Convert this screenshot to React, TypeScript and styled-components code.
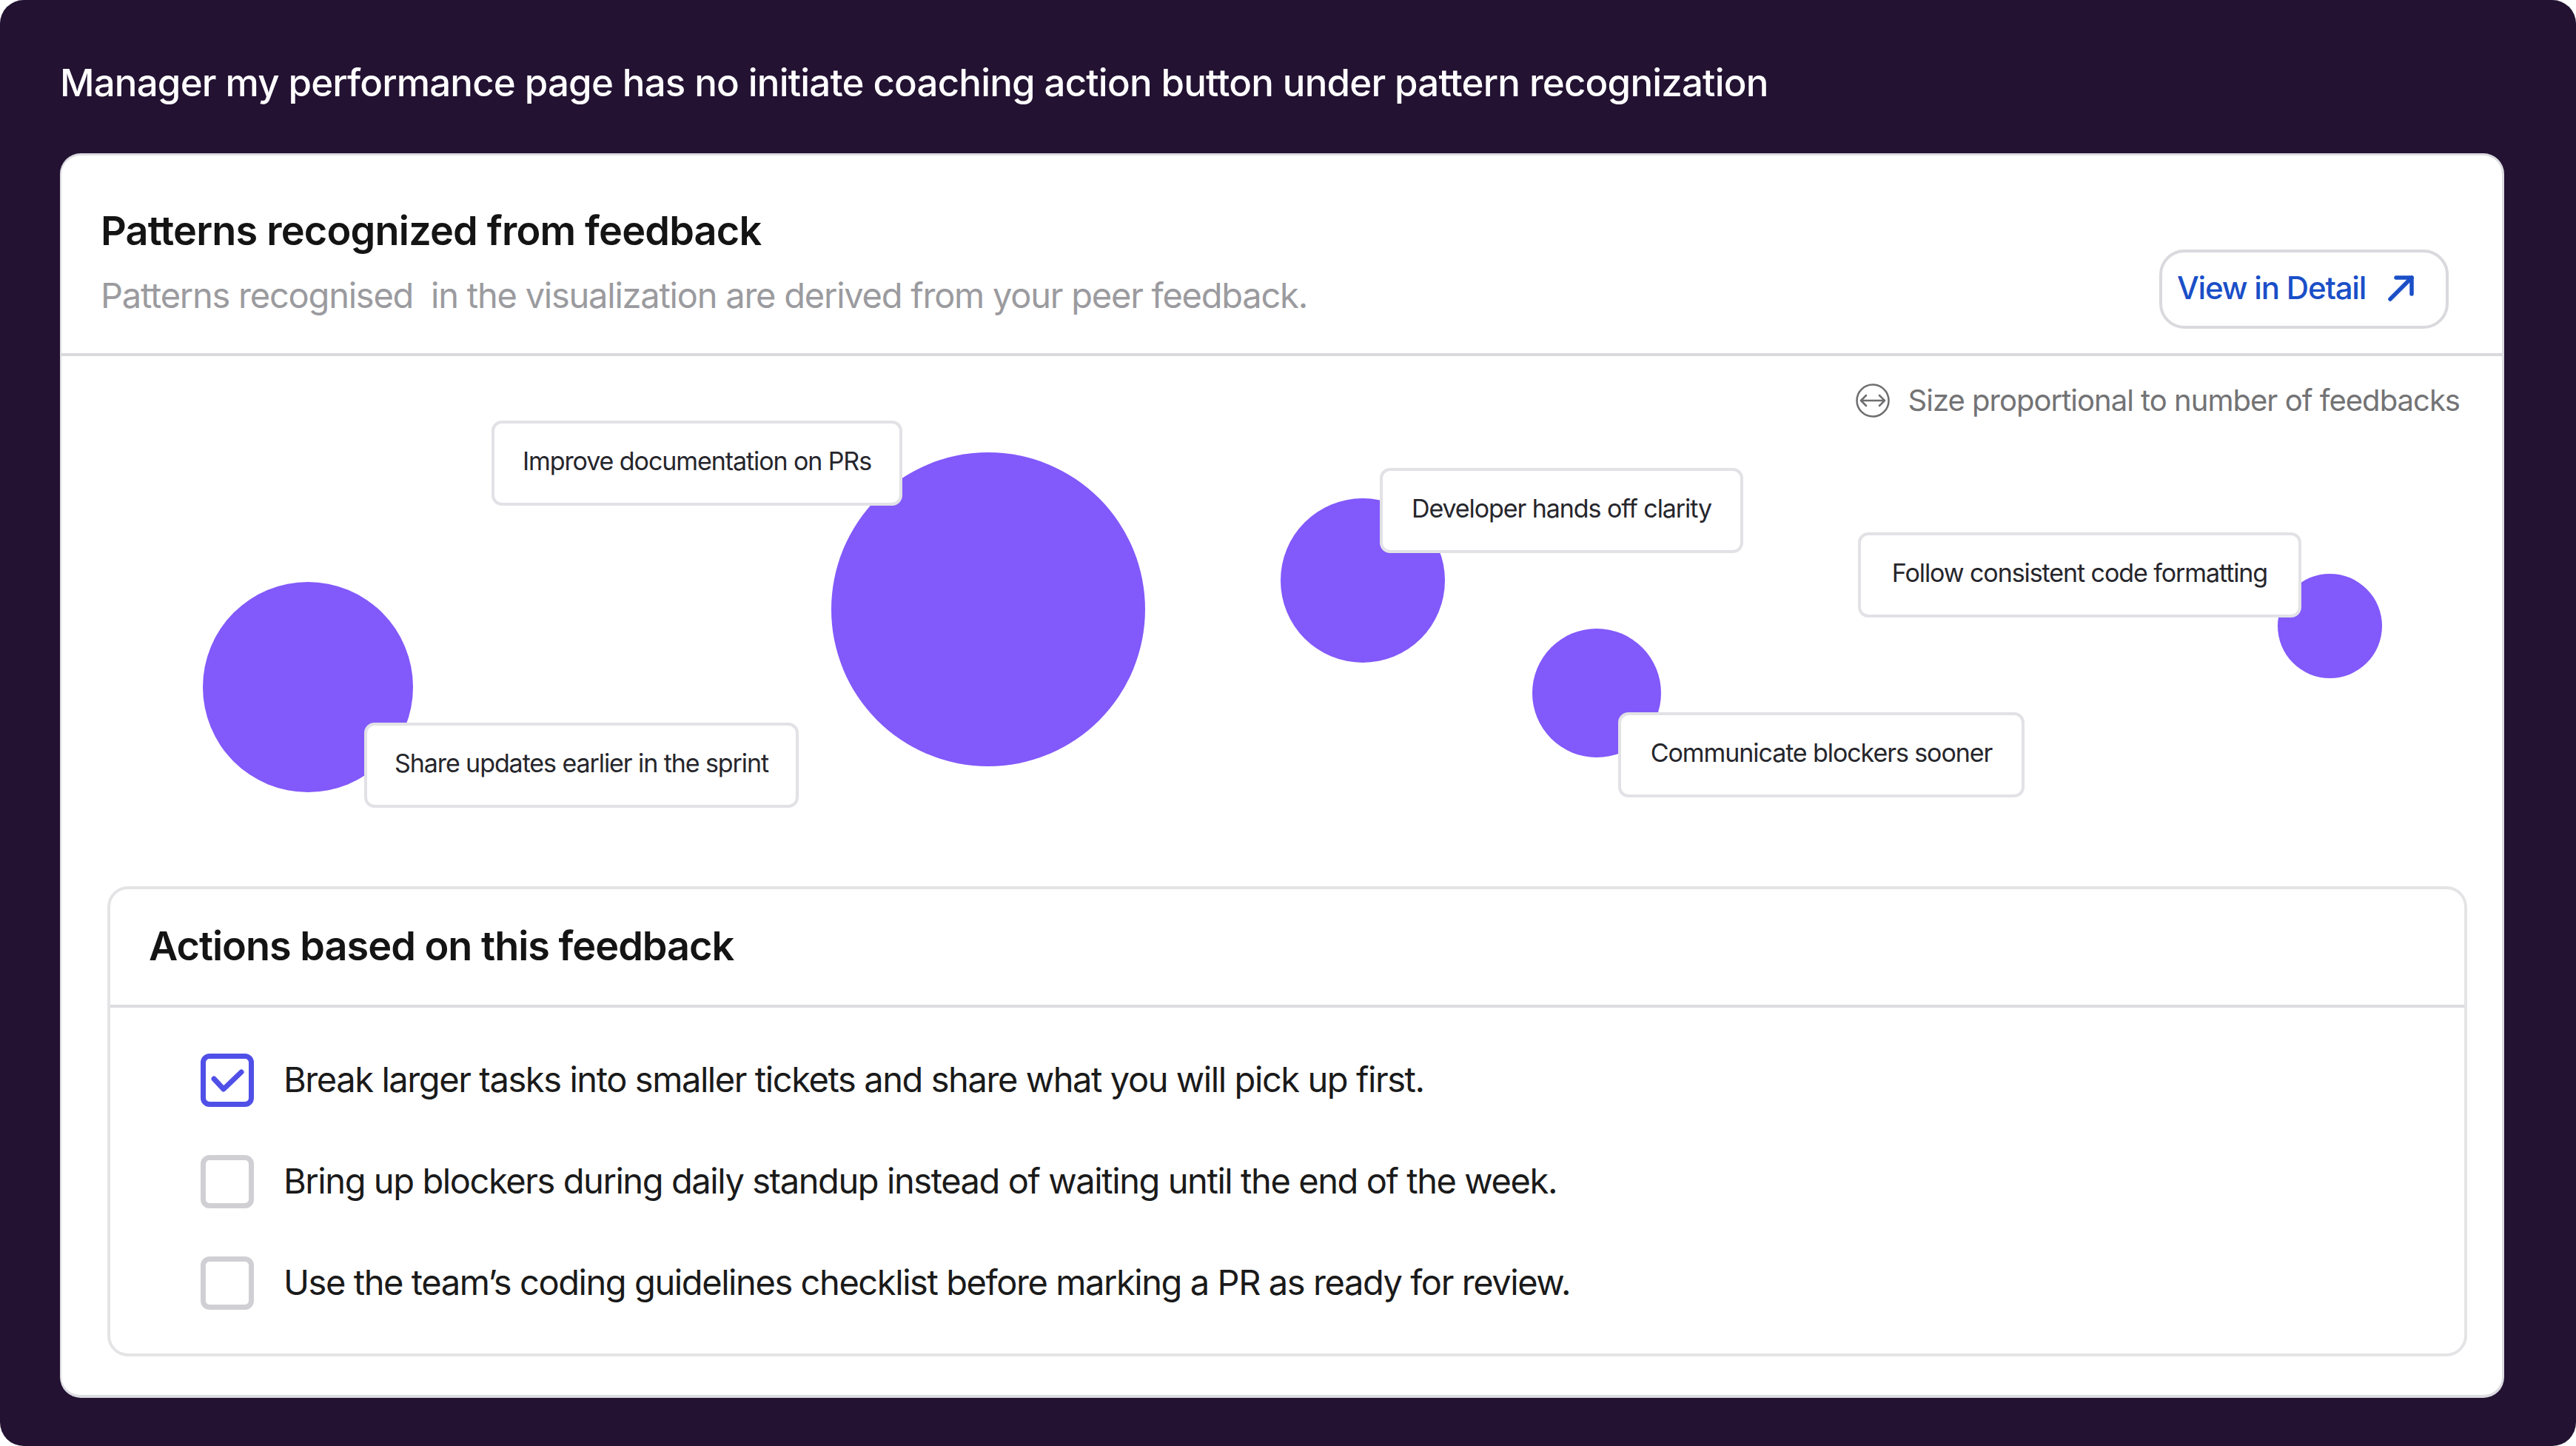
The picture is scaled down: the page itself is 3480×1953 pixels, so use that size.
import styled, { createGlobalStyle } from "styled-components";

const GlobalStyle = createGlobalStyle`
  html, body {
    margin: 0;
    padding: 0;
    background: #ffffff;
  }
  * {
    box-sizing: border-box;
  }
`;

const Frame = styled.div`
  width: 3480px;
  height: 1953px;
  padding: 82px 97px 65px 81px;
  display: flex;
  flex-direction: column;
  background: #231232;
  border-radius: 32px;
  font-family: Inter, "Liberation Sans", sans-serif;
`;

const Headline = styled.h1`
  margin: 0 0 65px;
  height: 60px;
  font-size: 51px;
  line-height: 60px;
  font-weight: 500;
  letter-spacing: -0.82px;
  white-space: nowrap;
  color: #ffffff;
`;

const Card = styled.main`
  flex: 1;
  display: flex;
  flex-direction: column;
  background: #ffffff;
  border: 3px solid #dcdce1;
  border-left-width: 2px;
  border-bottom-width: 4px;
  border-radius: 28px;
  overflow: hidden;
`;

const CardHeader = styled.header`
  height: 271px;
  flex-shrink: 0;
  padding: 70px 72px 0 53px;
  display: flex;
  justify-content: space-between;
  border-bottom: 4px solid #d9d9de;
`;

const Title = styled.h2`
  margin: 0;
  font-size: 54px;
  line-height: 64px;
  font-weight: 600;
  letter-spacing: -0.8px;
  color: #141414;
`;

const Subtitle = styled.p`
  margin: 25px 0 0;
  font-size: 47px;
  line-height: 60px;
  font-weight: 400;
  letter-spacing: -1.23px;
  white-space: pre;
  color: #9b9b9f;
`;

const DetailButton = styled.a`
  margin-top: 57px;
  width: 391px;
  height: 107px;
  padding: 0 0 4px 20px;
  display: flex;
  align-items: center;
  gap: 30px;
  border: 4px solid #d9d9de;
  border-radius: 34px;
  font-size: 42px;
  font-weight: 500;
  letter-spacing: -1.2px;
  color: #1a4fc7;
`;

const Chart = styled.section`
  position: relative;
  height: 716px;
  flex-shrink: 0;
`;

const Legend = styled.div`
  padding: 33px 57px 0 0;
  display: flex;
  justify-content: flex-end;
  align-items: center;
  gap: 25px;
  font-size: 40px;
  line-height: 54px;
  letter-spacing: -0.98px;
  color: #737375;
`;

const Bubble = styled.div<{ $x: number; $y: number; $r: number }>`
  position: absolute;
  left: ${(p) => p.$x - p.$r}px;
  top: ${(p) => p.$y - p.$r}px;
  width: ${(p) => p.$r * 2}px;
  height: ${(p) => p.$r * 2}px;
  border-radius: 50%;
  background: #8259fb;
`;

const Tag = styled.div<{ $x: number; $y: number; $w: number }>`
  position: absolute;
  left: ${(p) => p.$x}px;
  top: ${(p) => p.$y}px;
  width: ${(p) => p.$w}px;
  height: 115px;
  padding-bottom: 6px;
  display: flex;
  align-items: center;
  justify-content: center;
  background: #ffffff;
  border: 4px solid #e2e2e6;
  border-radius: 14px;
  font-size: 34px;
  letter-spacing: -1.08px;
  white-space: nowrap;
  color: #26262c;
`;

const ActionsPanel = styled.section`
  margin: 0 47px 0 62px;
  height: 635px;
  display: flex;
  flex-direction: column;
  border: 4px solid #e4e4e6;
  border-radius: 28px;
`;

const ActionsHeader = styled.h3`
  margin: 0;
  height: 160px;
  flex-shrink: 0;
  padding: 0 0 3px 52px;
  display: flex;
  align-items: center;
  border-bottom: 4px solid #dcdce1;
  font-size: 54px;
  font-weight: 600;
  letter-spacing: -1px;
  color: #141414;
`;

const ActionList = styled.ul`
  margin: 0;
  padding: 62px 0 0 122px;
  list-style: none;
  display: flex;
  flex-direction: column;
  gap: 65px;
`;

const ActionRow = styled.li`
  height: 72px;
  display: flex;
  align-items: center;
  gap: 40px;
  font-size: 47px;
  letter-spacing: -1.42px;
  white-space: nowrap;
  color: #1a1a1a;
`;

const ActionText = styled.span`
  margin-top: -3px;
`;

const Checkbox = styled.span<{ $checked?: boolean }>`
  width: 72px;
  height: 72px;
  flex-shrink: 0;
  display: flex;
  align-items: center;
  justify-content: center;
  border: 7px solid ${(p) => (p.$checked ? "#5050e8" : "#d0d0d4")};
  border-radius: 12px;
`;

const bubbles = [
  { x: 333, y: 447, r: 142 },
  { x: 1252, y: 341.5, r: 212 },
  { x: 1757.5, y: 303, r: 111 },
  { x: 2074, y: 455, r: 87 },
  { x: 3064.5, y: 364.5, r: 70.5 },
];

const tags = [
  { x: 581, y: 87, w: 555, text: "Improve documentation on PRs" },
  { x: 1781, y: 151, w: 491, text: "Developer hands off clarity" },
  { x: 2427, y: 238, w: 599, text: "Follow consistent code formatting" },
  { x: 409, y: 495, w: 587, text: "Share updates earlier in the sprint" },
  { x: 2103, y: 481, w: 549, text: "Communicate blockers sooner" },
];

const actions = [
  { text: "Break larger tasks into smaller tickets and share what you will pick up first.", checked: true },
  { text: "Bring up blockers during daily standup instead of waiting until the end of the week.", checked: false },
  { text: "Use the team’s coding guidelines checklist before marking a PR as ready for review.", checked: false },
];

function App() {
  return (
    <>
      <GlobalStyle />
      <Frame>
        <Headline>Manager my performance page has no initiate coaching action button under pattern recognization</Headline>
        <Card>
          <CardHeader>
            <div>
              <Title>Patterns recognized from feedback</Title>
              <Subtitle>Patterns recognised  in the visualization are derived from your peer feedback.</Subtitle>
            </div>
            <DetailButton>
              View in Detail
              <svg width="36" height="36" viewBox="0 0 36 36" fill="none" stroke="#1a4fc7" strokeWidth="5.5" strokeLinecap="round" strokeLinejoin="round">
                <path d="M3 33 L32 4" />
                <path d="M11 4 H32 V26" />
              </svg>
            </DetailButton>
          </CardHeader>
          <Chart>
            <Legend>
              <svg width="46" height="46" viewBox="0 0 46 46" fill="none" stroke="#6e6e70" strokeWidth="2.5" strokeLinecap="round" strokeLinejoin="round">
                <circle cx="23" cy="23" r="21.5" />
                <path d="M7 23 H39 M14 16 L7 23 L14 30 M32 16 L39 23 L32 30" />
              </svg>
              Size proportional to number of feedbacks
            </Legend>
            {bubbles.map((b) => (
              <Bubble key={b.x} $x={b.x} $y={b.y} $r={b.r} />
            ))}
            {tags.map((t) => (
              <Tag key={t.text} $x={t.x} $y={t.y} $w={t.w}>
                {t.text}
              </Tag>
            ))}
          </Chart>
          <ActionsPanel>
            <ActionsHeader>Actions based on this feedback</ActionsHeader>
            <ActionList>
              {actions.map((a) => (
                <ActionRow key={a.text}>
                  <Checkbox $checked={a.checked}>
                    {a.checked && (
                      <svg width="58" height="58" viewBox="0 0 58 58" fill="none" stroke="#5050e8" strokeWidth="7" strokeLinecap="round" strokeLinejoin="round">
                        <path d="M11 27 L24 41 L48 18" />
                      </svg>
                    )}
                  </Checkbox>
                  <ActionText>{a.text}</ActionText>
                </ActionRow>
              ))}
            </ActionList>
          </ActionsPanel>
        </Card>
      </Frame>
    </>
  );
}

export default App;
